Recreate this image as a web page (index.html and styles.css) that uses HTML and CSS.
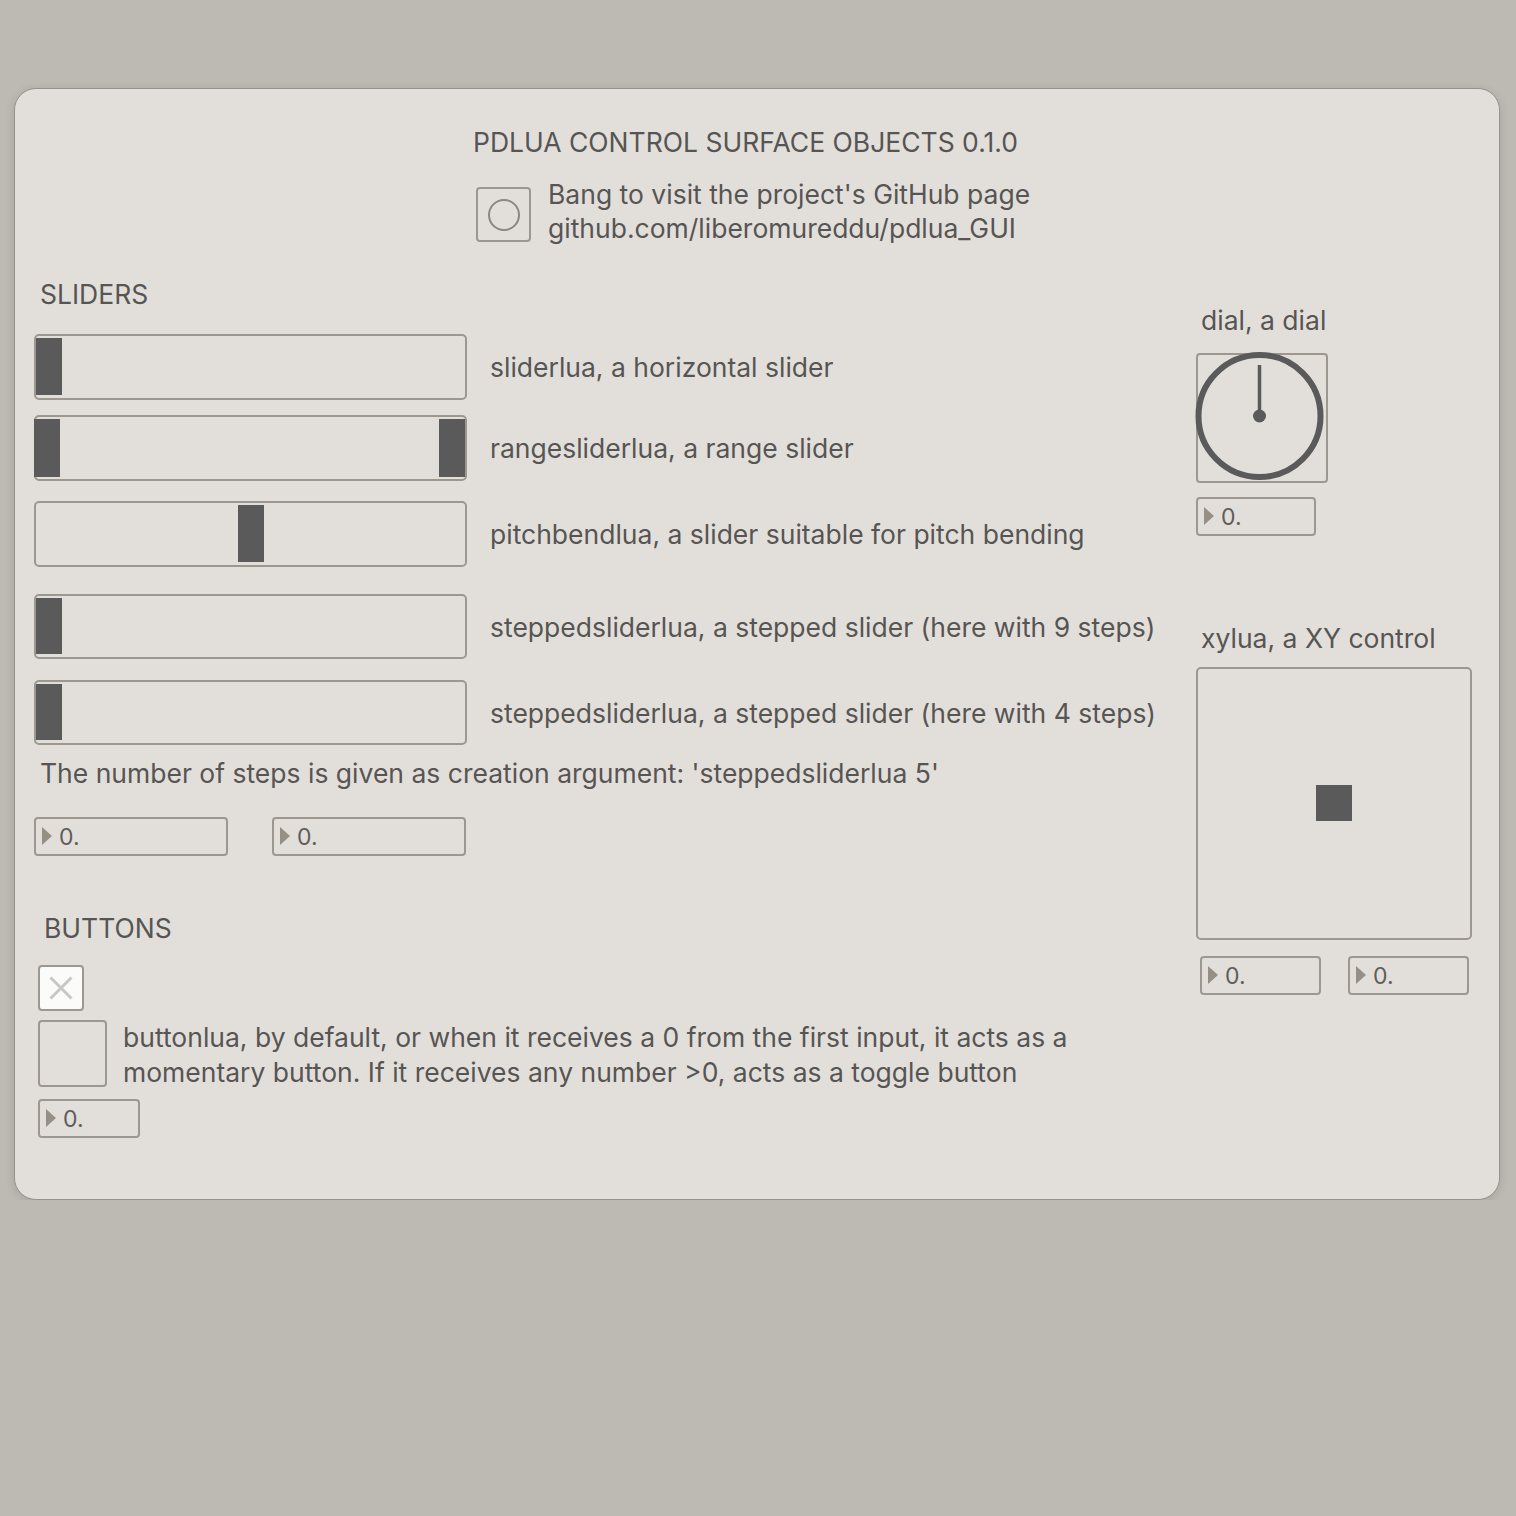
FILE: index.html
```html
<!DOCTYPE html>
<html lang="en">
<head>
    <meta charset="UTF-8">
    <title>pdlua control surface objects</title>
    <link rel="stylesheet" href="styles.css">
</head>
<body>
    <div class="patch">
        <!-- Header -->
        <div class="header">
            <div class="title">PDLUA CONTROL SURFACE OBJECTS 0.1.0</div>
            <div class="bang-row">
                <div class="bang"><span class="bang-circle"></span></div>
                <div class="bang-text">
                    Bang to visit the project's GitHub page<br>
                    github.com/liberomureddu/pdlua_GUI
                </div>
            </div>
        </div>

        <div class="main">
            <!-- Left column: sliders and buttons -->
            <div class="left">
                <div class="section-title">SLIDERS</div>

                <div class="slider-row row-1">
                    <div class="slider"><span class="knob" style="left: 0"></span></div>
                    <div class="label">sliderlua, a horizontal slider</div>
                </div>
                <div class="slider-row row-2">
                    <div class="slider"><span class="knob knob-edge" style="left: -2px"></span><span class="knob knob-edge" style="right: 0"></span></div>
                    <div class="label">rangesliderlua, a range slider</div>
                </div>
                <div class="slider-row row-3">
                    <div class="slider"><span class="knob" style="left: 202px"></span></div>
                    <div class="label">pitchbendlua, a slider suitable for pitch bending</div>
                </div>
                <div class="slider-row row-4">
                    <div class="slider short"><span class="knob" style="left: 0"></span></div>
                    <div class="label">steppedsliderlua, a stepped slider (here with 9 steps)</div>
                </div>
                <div class="slider-row row-5">
                    <div class="slider short"><span class="knob" style="left: 0"></span></div>
                    <div class="label">steppedsliderlua, a stepped slider (here with 4 steps)</div>
                </div>

                <div class="note">The number of steps is given as creation argument: 'steppedsliderlua 5'</div>

                <div class="num-pair">
                    <div class="number wide">0.</div>
                    <div class="number wide">0.</div>
                </div>

                <div class="section-title buttons-title">BUTTONS</div>

                <div class="toggle">
                    <svg width="24" height="24" viewBox="0 0 24 24">
                        <path d="M1.5 1.5 L22.5 22.5 M22.5 1.5 L1.5 22.5" stroke="#c9c7c4" stroke-width="3"/>
                    </svg>
                </div>

                <div class="button-row">
                    <div class="button"></div>
                    <div class="button-text">
                        buttonlua, by default, or when it receives a 0 from the first input, it acts as a<br>
                        momentary button. If it receives any number &gt;0, acts as a toggle button
                    </div>
                </div>

                <div class="number small">0.</div>
            </div>

            <!-- Right column: dial and xy -->
            <div class="right">
                <div class="side-label dial-label">dial, a dial</div>
                <div class="dial">
                    <svg width="128" height="126" viewBox="0 0 128 126">
                        <circle cx="61.5" cy="61" r="61" fill="none" stroke="#5a5a5a" stroke-width="6"/>
                        <line x1="61.5" y1="10" x2="61.5" y2="60" stroke="#5a5a5a" stroke-width="3.5"/>
                        <circle cx="61.5" cy="61" r="6.5" fill="#5a5a5a"/>
                    </svg>
                </div>
                <div class="number dial-num">0.</div>

                <div class="side-label xy-label">xylua, a XY control</div>
                <div class="xy"><span class="xy-dot"></span></div>
                <div class="num-pair xy-nums">
                    <div class="number mid">0.</div>
                    <div class="number mid">0.</div>
                </div>
            </div>
        </div>
    </div>
</body>
</html>
```

FILE: styles.css
```css
/* Page and patch window */
body {
    margin: 0;
    background-color: #bdb9b3;
    font-family: Inter, "Noto Sans", sans-serif;
    color: #575553;
    font-size: 26.5px;
}

.patch {
    margin: 88px 16px 0 14px;
    height: 1110px;
    background-color: #e2dfdb;
    border: 1px solid #96928c;
    border-radius: 22px;
    box-shadow: 0 2px 10px rgba(0, 0, 0, 0.12);
}

/* Header with title and bang */
.header {
    padding-top: 38px;
    margin-left: 458px;
}

.title {
    line-height: 30px;
}

.bang-row {
    display: flex;
    align-items: flex-start;
    margin-top: 20px;
    margin-left: 3px;
    gap: 17px;
}

.bang {
    width: 51px;
    height: 51px;
    margin-top: 10px;
    border: 2px solid #9d988f;
    border-radius: 4px;
    display: flex;
    align-items: center;
    justify-content: center;
}

.bang-circle {
    width: 28px;
    height: 28px;
    border: 2px solid #8c877f;
    border-radius: 50%;
}

.bang-text {
    line-height: 34px;
}

/* Two columns */
.main {
    display: flex;
    margin-top: 34px;
}

.left {
    width: 1162px;
    margin-left: 19px;
}

.right {
    flex: none;
}

.section-title {
    line-height: 30px;
    margin-left: 6px;
}

.buttons-title {
    margin-top: 57px;
    margin-left: 10px;
}

/* Sliders */
.slider-row {
    display: flex;
    align-items: center;
    gap: 23px;
}

.row-1 { margin-top: 25px; }
.row-2 { margin-top: 15px; }
.row-3 { margin-top: 20px; }
.row-4 { margin-top: 27px; }
.row-5 { margin-top: 21px; }

.slider {
    position: relative;
    width: 429px;
    height: 62px;
    border: 2px solid #9d988f;
    border-radius: 5px;
    flex: none;
}

.slider.short {
    height: 61px;
}

.knob {
    position: absolute;
    top: 2px;
    bottom: 3px;
    width: 26px;
    background-color: #5a5a5a;
}

.knob-edge {
    top: 2px;
    bottom: 2px;
}

.label {
    white-space: nowrap;
}

.note {
    margin-top: 13px;
    margin-left: 6px;
    line-height: 30px;
}

/* Number boxes */
.num-pair {
    display: flex;
    gap: 44px;
    margin-top: 29px;
}

.number {
    position: relative;
    height: 35px;
    border: 2px solid #9d988f;
    border-radius: 4px;
    line-height: 37px;
    padding-left: 23px;
    font-size: 23px;
    color: #5f5d5a;
    box-sizing: content-box;
}

.number::before {
    content: "";
    position: absolute;
    left: 6px;
    top: 8px;
    border-top: 9px solid transparent;
    border-bottom: 9px solid transparent;
    border-left: 10px solid #958f86;
}

.number.wide { width: 167px; }
.number.small { width: 75px; margin-top: 9px; }
.number.mid { width: 94px; }

/* Buttons */
.toggle {
    width: 42px;
    height: 42px;
    margin-top: 22px;
    margin-left: 4px;
    border: 2px solid #9d988f;
    border-radius: 4px;
    background-color: #fbfbfa;
    display: flex;
    align-items: center;
    justify-content: center;
}

.button-row {
    display: flex;
    align-items: flex-start;
    gap: 16px;
    margin-top: 9px;
    margin-left: 4px;
}

.button {
    width: 65px;
    height: 63px;
    border: 2px solid #9d988f;
    border-radius: 4px;
    flex: none;
}

.button-text {
    line-height: 35px;
    margin-top: 0;
}

.left > .number.small {
    margin-left: 4px;
}

/* Right column widgets */
.side-label {
    line-height: 30px;
    margin-left: 5px;
}

.dial-label { margin-top: 26px; }
.xy-label { margin-top: 87px; }

.dial {
    width: 128px;
    height: 126px;
    margin-top: 18px;
    border: 2px solid #9d988f;
    border-radius: 4px;
}

.dial svg {
    display: block;
    overflow: visible;
}

.dial-num {
    width: 93px;
    margin-top: 14px;
}

.xy {
    position: relative;
    width: 272px;
    height: 269px;
    margin-top: 14px;
    border: 2px solid #9d988f;
    border-radius: 5px;
}

.xy-dot {
    position: absolute;
    left: 118px;
    top: 116px;
    width: 36px;
    height: 36px;
    background-color: #5a5a5a;
}

.xy-nums {
    margin-top: 16px;
    margin-left: 4px;
    gap: 27px;
}
```
